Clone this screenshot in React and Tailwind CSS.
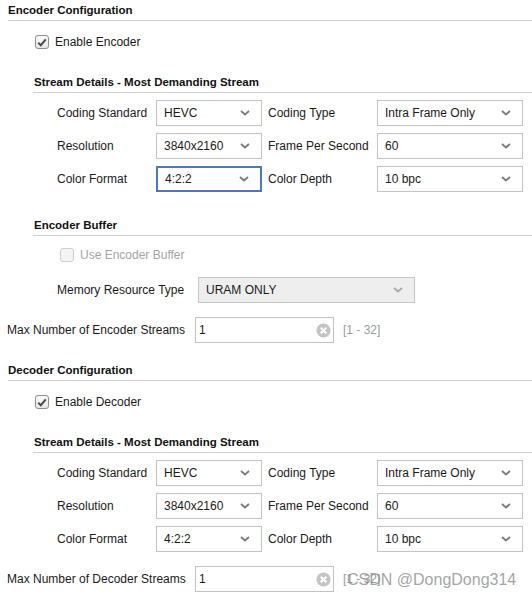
import React from "react";

function Chevron({ light }) {
  return (
    <svg width="10" height="6" viewBox="0 0 10 6" className="shrink-0">
      <path
        d="M1 1 L5 4.5 L9 1"
        fill="none"
        stroke={light ? "#a8a8a8" : "#7a7a7a"}
        strokeWidth="1.8"
      />
    </svg>
  );
}

function Select({ value, width, focused, disabled }) {
  return (
    <div
      className={`h-[26px] flex items-center justify-between pl-[7px] pr-[11px] ${width} ${
        focused
          ? "border-2 border-[#4a78c4] pl-[6px] pr-[10px]"
          : disabled
          ? "border border-[#c6c6c6] bg-[#eeeeee]"
          : "border border-[#c3c3c3] bg-white"
      }`}
    >
      <span className="text-[12px] text-[#1a1a1a]">{value}</span>
      <Chevron light={disabled} />
    </div>
  );
}

function Checkbox({ checked, disabled, label }) {
  return (
    <div className="h-[16px] flex items-center gap-[6px]">
      <div
        className={`w-[14px] h-[14px] rounded-[3px] border flex items-center justify-center ${
          disabled
            ? "border-[#cfcfcf] bg-[#f3f3f3]"
            : "border-[#8f8f8f] bg-gradient-to-b from-[#fbfbfb] to-[#e6e6e6]"
        }`}
      >
        {checked && (
          <svg width="10" height="9" viewBox="0 0 10 9">
            <path
              d="M1.2 4.6 L3.8 7.2 L8.8 1.4"
              fill="none"
              stroke="#4a4a4a"
              strokeWidth="2"
            />
          </svg>
        )}
      </div>
      <span className={`text-[12px] ${disabled ? "text-[#a3a3a3]" : "text-[#1a1a1a]"}`}>
        {label}
      </span>
    </div>
  );
}

function Header({ title, inset }) {
  return (
    <div
      className={`h-[21px] pt-[2px] flex items-center border-b border-[#cfcfcf] ${
        inset ? "ml-[33px]" : "ml-[8px]"
      }`}
    >
      <span className={`text-[11.5px] font-bold text-[#111] ${inset ? "pl-px" : ""}`}>
        {title}
      </span>
    </div>
  );
}

function StreamRows({ focusColor }) {
  const rows = [
    ["Coding Standard", "HEVC", "Coding Type", "Intra Frame Only"],
    ["Resolution", "3840x2160", "Frame Per Second", "60"],
    ["Color Format", "4:2:2", "Color Depth", "10 bpc"],
  ];
  return (
    <div className="mt-[7px] flex flex-col gap-[7px] pl-[57px]">
      {rows.map(([l1, v1, l2, v2], i) => (
        <div key={l1} className="flex items-center">
          <span className="w-[99px] text-[12px] text-[#1a1a1a]">{l1}</span>
          <Select value={v1} width="w-[106px]" focused={focusColor && i === 2} />
          <span className="w-[115px] pl-[6px] text-[12px] text-[#1a1a1a]">{l2}</span>
          <Select value={v2} width="w-[146px]" />
        </div>
      ))}
    </div>
  );
}

function CountInput({ label, range }) {
  return (
    <div className="flex items-center pl-[7px]">
      <span className="w-[188px] text-[12px] text-[#1a1a1a]">{label}</span>
      <div className="w-[139px] h-[26px] border border-[#c3c3c3] flex items-center justify-between pl-[3px] pr-[2px]">
        <span className="text-[12px] text-[#1a1a1a]">1</span>
        <svg width="15" height="15" viewBox="0 0 16 16">
          <circle cx="8" cy="8" r="7.5" fill="#c4c4c4" />
          <path d="M5 5 L11 11 M11 5 L5 11" stroke="#fff" strokeWidth="2.2" />
        </svg>
      </div>
      {range && <span className="ml-[9px] text-[12px] text-[#9a9a9a]">[1 - 32]</span>}
    </div>
  );
}

export default function App() {
  return (
    <div
      className="relative w-[532px] h-[598px] bg-white overflow-hidden"
      style={{ fontFamily: '"Liberation Sans", Arial, sans-serif' }}
    >
      <Header title="Encoder Configuration" />
      <div className="mt-[13px] pl-[35px]">
        <Checkbox checked label="Enable Encoder" />
      </div>
      <div className="mt-[22px]">
        <Header title="Stream Details - Most Demanding Stream" inset />
      </div>
      <StreamRows focusColor />

      <div className="mt-[23px]">
        <Header title="Encoder Buffer" inset />
      </div>
      <div className="mt-[11px] pl-[60px]">
        <Checkbox disabled label="Use Encoder Buffer" />
      </div>
      <div className="mt-[14px] flex items-center pl-[57px]">
        <span className="w-[141px] text-[12px] text-[#1a1a1a]">Memory Resource Type</span>
        <Select value="URAM ONLY" width="w-[217px]" disabled />
      </div>
      <div className="mt-[14px]">
        <CountInput label="Max Number of Encoder Streams" range />
      </div>

      <div className="mt-[17px]">
        <Header title="Decoder Configuration" />
      </div>
      <div className="mt-[13px] pl-[35px]">
        <Checkbox checked label="Enable Decoder" />
      </div>
      <div className="mt-[22px]">
        <Header title="Stream Details - Most Demanding Stream" inset />
      </div>
      <StreamRows />
      <div className="mt-[14px]">
        <CountInput label="Max Number of Decoder Streams" range />
      </div>

      <span className="absolute left-[347px] top-[568px] text-[16px] text-[#8c8c8c]/80 whitespace-nowrap">
        CSDN @DongDong314
      </span>
    </div>
  );
}
